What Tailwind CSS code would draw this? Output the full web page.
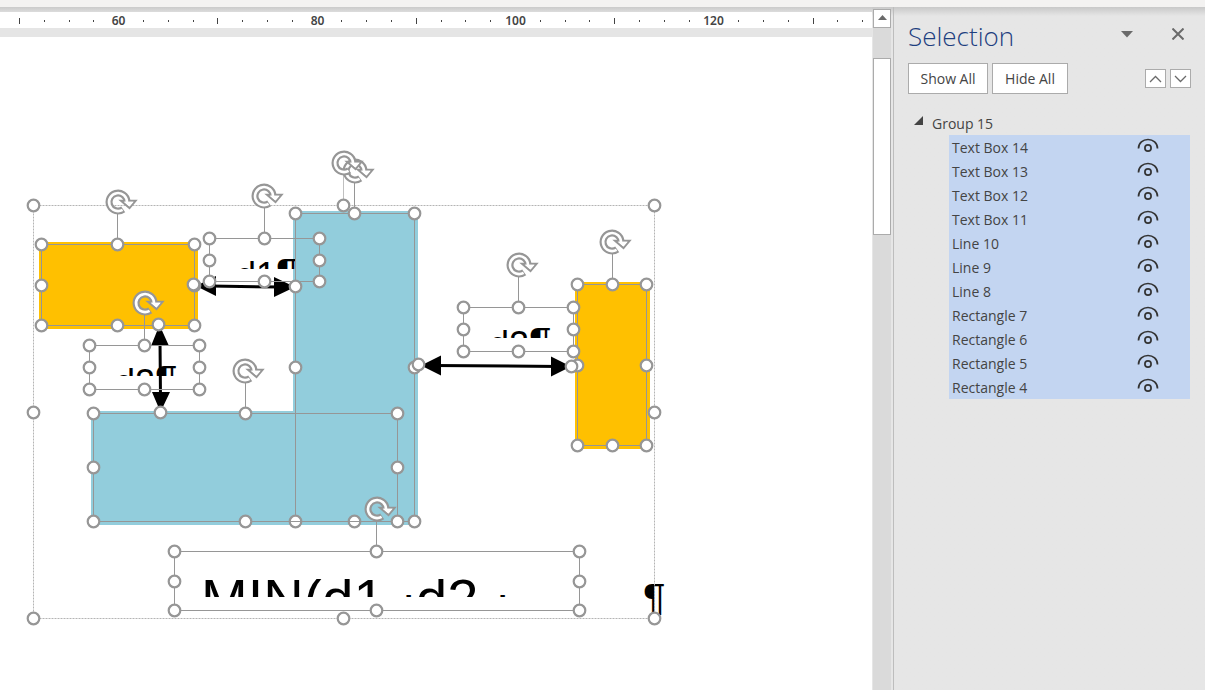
<!DOCTYPE html>
<html lang="en">
<head>
    <meta charset="UTF-8">
    <meta name="viewport" content="width=device-width, initial-scale=1.0">
    <title>Document | Selection Pane</title>
    <script src="https://cdn.jsdelivr.net/npm/@tailwindcss/browser@4"></script>
</head>
<body class="h-screen flex flex-col overflow-hidden bg-[#e6e6e6] font-['Open_Sans',sans-serif] text-[#444444]">

    <!-- Bottom edge of the ribbon -->
    <header class="h-[7px] shrink-0 bg-[#f3f2f1]"></header>

    <div class="flex-1 flex min-h-0 bg-linear-to-b from-[#c8c8c8] to-[#e6e6e6] to-[9px]">

        <!-- Document area -->
        <main class="flex-1 min-w-0 flex flex-col">
            <div class="h-[5px] shrink-0 bg-linear-to-b from-[#cacaca] to-[#dcdcdc]"></div>
            <svg id="ruler" class="h-4 w-full shrink-0 bg-white font-['Noto_Sans',sans-serif] text-[12px] font-semibold" fill="#444" aria-label="Ruler"></svg>
            <div class="h-[9px] shrink-0 bg-[#e5e5e5]"></div>

            <div class="flex-1 min-h-0 bg-white">
                <svg class="w-full h-full" aria-label="Drawing canvas">
                    <defs>
                        <g id="handle">
                            <circle r="5.8" fill="#fff" stroke="#969696" stroke-width="2.2"/>
                        </g>
                        <g id="rotate">
                            <path d="M5.2 7.4A9 9 0 1 1 9 -1" fill="none" stroke="#969696" stroke-width="7"/>
                            <path d="M3 -1.2H17.6L11.5 6Z" fill="#fff" stroke="#969696" stroke-width="2"/>
                            <path d="M4.6 7.8A9 9 0 1 1 9 0.4" fill="none" stroke="#fff" stroke-width="2.6"/>
                            <path d="M6 -0.3H15.6L11.5 4.5Z" fill="#fff"/>
                        </g>
                        <clipPath id="clipD1"><rect x="205" y="257" width="91" height="12"/></clipPath>
                        <clipPath id="clipD2"><rect x="460" y="326" width="110" height="12"/></clipPath>
                        <clipPath id="clipD3"><rect x="85" y="364" width="110" height="12"/></clipPath>
                        <clipPath id="clipMin"><rect x="176" y="579" width="400" height="18"/></clipPath>
                        <clipPath id="clipMark"><rect x="640" y="575" width="30" height="40"/></clipPath>
                    </defs>

                    <g transform="translate(0 -37)">
                        <!-- Shapes -->
                        <g fill="#92cddc">
                            <rect x="293" y="211" width="125" height="314"/>
                            <rect x="91" y="411" width="310" height="114"/>
                        </g>
                        <g fill="#ffc000">
                            <rect x="39" y="242" width="159" height="87"/>
                            <rect x="575" y="282" width="75" height="167"/>
                        </g>

                        <!-- Arrows -->
                        <g stroke="#000" stroke-width="3">
                            <path d="M210 286L280 287M432 365.500L560 366.500M160 340L160.500 398"/>
                        </g>
                        <path d="M196 286L216 276V296ZM295 287L274 277V297ZM421 365.500L441 355.500V375.500ZM571 366.500L551 356.500V376.500ZM159.500 325L151 346H169ZM160.500 412L152 392H170Z"/>

                        <!-- Text box contents, cut off by their frames -->
                        <g class="font-['Liberation_Sans',sans-serif]">
                            <text x="236" y="288" font-size="36" clip-path="url(#clipD1)">d1<tspan font-size="42">¶</tspan></text>
                            <text x="489" y="357" font-size="36" clip-path="url(#clipD2)">d2<tspan font-size="42">¶</tspan></text>
                            <text x="115" y="395" font-size="36" clip-path="url(#clipD3)">d2<tspan font-size="42">¶</tspan></text>
                            <text x="201" y="618" font-size="56" clip-path="url(#clipMin)">MIN(d1,<tspan x="401" y="610" font-size="46">·</tspan><tspan x="416" y="618">d2,</tspan><tspan x="495" y="610" font-size="46">·</tspan></text>
                            <text x="643" y="613" font-size="42" clip-path="url(#clipMark)">¶</text>
                        </g>

                        <!-- Group frame -->
                        <rect x="33.500" y="205.500" width="621" height="413" fill="none" stroke="#b4b4b4" stroke-dasharray="2 1"/>

                        <!-- Object frames and rotation stems -->
                        <g fill="none" stroke="#969696">
                            <rect x="41.500" y="244.500" width="153" height="81"/>
                            <rect x="295.500" y="213.500" width="119" height="308"/>
                            <rect x="93.500" y="413.500" width="304" height="108"/>
                            <rect x="577.500" y="284.500" width="69" height="161"/>
                            <rect x="209.500" y="238.500" width="110" height="43"/>
                            <rect x="463.500" y="307.500" width="110" height="44"/>
                            <rect x="89.500" y="345.500" width="110" height="44"/>
                            <rect x="174.500" y="551.500" width="405" height="59"/>
                            <path d="M117.500 213V244M264.500 208V238M354.500 182V213M518.500 277V307M612.500 254V284M144.500 314V345M245.500 382V413M376.500 520V551"/>
                            <path d="M343.500 174V205" stroke="#c0c0c0"/>
                        </g>

                        <g>
                            <use href="#rotate" x="118" y="202"/>
                            <use href="#rotate" x="264" y="196"/>
                            <use href="#rotate" x="355" y="171"/>
                            <use href="#rotate" x="344" y="163"/>
                            <use href="#rotate" x="519" y="265"/>
                            <use href="#rotate" x="612" y="242"/>
                            <use href="#rotate" x="145" y="303"/>
                            <use href="#rotate" x="245" y="371"/>
                            <use href="#rotate" x="377" y="509"/>
                        </g>

                        <!-- Handles -->
                        <g id="handles"></g>
                        <path d="M290 521.500H301M349 521.500H360" stroke="#969696"/>
                    </g>
                </svg>
            </div>
        </main>

        <!-- Vertical scrollbar -->
        <div class="w-[22px] shrink-0 flex flex-col pt-[2px] pl-px pr-[2px] border-r border-[#bdbdbd]">
            <button aria-label="Scroll up" class="h-[19px] shrink-0 bg-white border border-[#ababab] flex justify-center pt-[5px]">
                <svg width="9" height="6"><path d="M4.500 0L9 5H0Z" fill="#6a6a6a"/></svg>
            </button>
            <div class="flex-1 bg-[#dadada] pt-[30px]">
                <div class="h-[177px] bg-white border border-[#ababab]"></div>
            </div>
        </div>

        <!-- Selection pane -->
        <aside class="w-[311px] shrink-0 pl-[14px] pr-[14px] pt-[11px]">
            <div class="flex items-center h-9">
                <h1 class="flex-1 text-[26px] leading-9 font-light text-[#1e3f80]">Selection</h1>
                <button aria-label="Pane options" class="mr-[39px] pb-[4px]">
                    <svg width="12" height="7"><path d="M0 0H12L6 6.500Z" fill="#6a6a6a"/></svg>
                </button>
                <button aria-label="Close" class="mr-[7px] pb-[4px]">
                    <svg width="12" height="12"><path d="M0.500 0.500L11.500 11.500M11.500 0.500L0.500 11.500" stroke="#6a6a6a" stroke-width="2"/></svg>
                </button>
            </div>

            <div class="flex items-center mt-[9px] gap-1 text-[14px]">
                <button class="w-20 h-[31px] bg-white border border-[#ababab]">Show All</button>
                <button class="w-[76px] h-[31px] bg-white border border-[#ababab]">Hide All</button>
                <button aria-label="Bring forward" class="ml-auto w-[21px] h-[19px] bg-white border border-[#ababab] flex items-center justify-center">
                    <svg width="13" height="8" fill="none" stroke="#6a6a6a" stroke-width="1.300"><path d="M1 7L6.500 1.500L12 7"/></svg>
                </button>
                <button aria-label="Send backward" class="w-[21px] h-[19px] bg-white border border-[#ababab] flex items-center justify-center">
                    <svg width="13" height="8" fill="none" stroke="#6a6a6a" stroke-width="1.300"><path d="M1 1L6.500 6.500L12 1"/></svg>
                </button>
            </div>

            <div class="mt-[17px] text-[14px] leading-6">
                <button class="flex items-center h-6 pl-[6px] pt-px gap-[9px]">
                    <svg width="9" height="9" class="mb-[6px]"><path d="M9 0V9H0Z" fill="#444"/></svg>
                    Group 15
                </button>
                <ul id="objects" class="ml-[41px] mr-px bg-[#c3d5f1]"></ul>
            </div>
        </aside>
    </div>

    <!-- Scripts -->
    <script>
    const objects = ['Text Box 14', 'Text Box 13', 'Text Box 12', 'Text Box 11', 'Line 10', 'Line 9', 'Line 8',
        'Rectangle 7', 'Rectangle 6', 'Rectangle 5', 'Rectangle 4'];

    document.getElementById('objects').innerHTML = objects.map(name => `
        <li class="flex items-center h-6 pl-[3px] pr-[31px]">
            <button class="flex-1 text-left pt-px">${name}</button>
            <button aria-label="Toggle ${name}" class="pb-[3px]">
                <svg width="22" height="15" fill="none" stroke="#333" stroke-width="1.700">
                    <path d="M1.500 10.500C1.500 5 6 1.500 11 1.500S20.500 5 20.500 10.500"/>
                    <circle cx="11" cy="10" r="3.100"/>
                </svg>
            </button>
        </li>`).join('');

    // Ruler: a label every 20 units, a long tick halfway, dots in between
    let marks = '';
    for (let i = 0; i < 35; i++) {
        const x = Math.round(19 + i * 24.8);
        if (i % 8 === 4) {
            marks += `<text x="${x + 0.5}" y="13" text-anchor="middle">${60 + (i - 4) / 8 * 20}</text>`;
        } else if (i % 8 === 0) {
            marks += `<rect x="${x}" y="6" width="1" height="6"/>`;
        } else {
            marks += `<rect x="${x}" y="8" width="1" height="2"/>`;
        }
    }
    document.getElementById('ruler').innerHTML = marks;

    const handles = [
        [33, 205], [343, 205], [654, 205], [33, 412], [654, 412], [33, 618], [343, 618], [654, 618],
        [41, 244], [117, 244], [194, 244], [41, 285], [194, 285], [41, 325], [117, 325], [194, 325],
        [295, 213], [354, 213], [414, 213], [295, 367], [414, 367], [295, 521], [354, 521], [414, 521],
        [93, 413], [245, 413], [397, 413], [93, 467], [397, 467], [93, 521], [245, 521], [397, 521],
        [577, 284], [612, 284], [646, 284], [577, 365], [646, 365], [577, 445], [612, 445], [646, 445],
        [209, 238], [264, 238], [319, 238], [209, 260], [319, 260], [209, 281], [264, 281], [319, 281],
        [463, 307], [518, 307], [573, 307], [463, 329], [573, 329], [463, 351], [518, 351], [573, 351],
        [89, 345], [144, 345], [199, 345], [89, 367], [199, 367], [89, 389], [144, 389], [199, 389],
        [174, 551], [376, 551], [579, 551], [174, 581], [579, 581], [174, 610], [376, 610], [579, 610],
        [193, 284], [295, 286], [158, 324], [160, 412], [418, 364], [571, 366]
    ];
    document.getElementById('handles').innerHTML = handles.map(([x, y]) =>
        `<use href="#handle" x="${x + 0.5}" y="${y + 0.5}"/>`).join('');
    </script>

</body>
</html>
